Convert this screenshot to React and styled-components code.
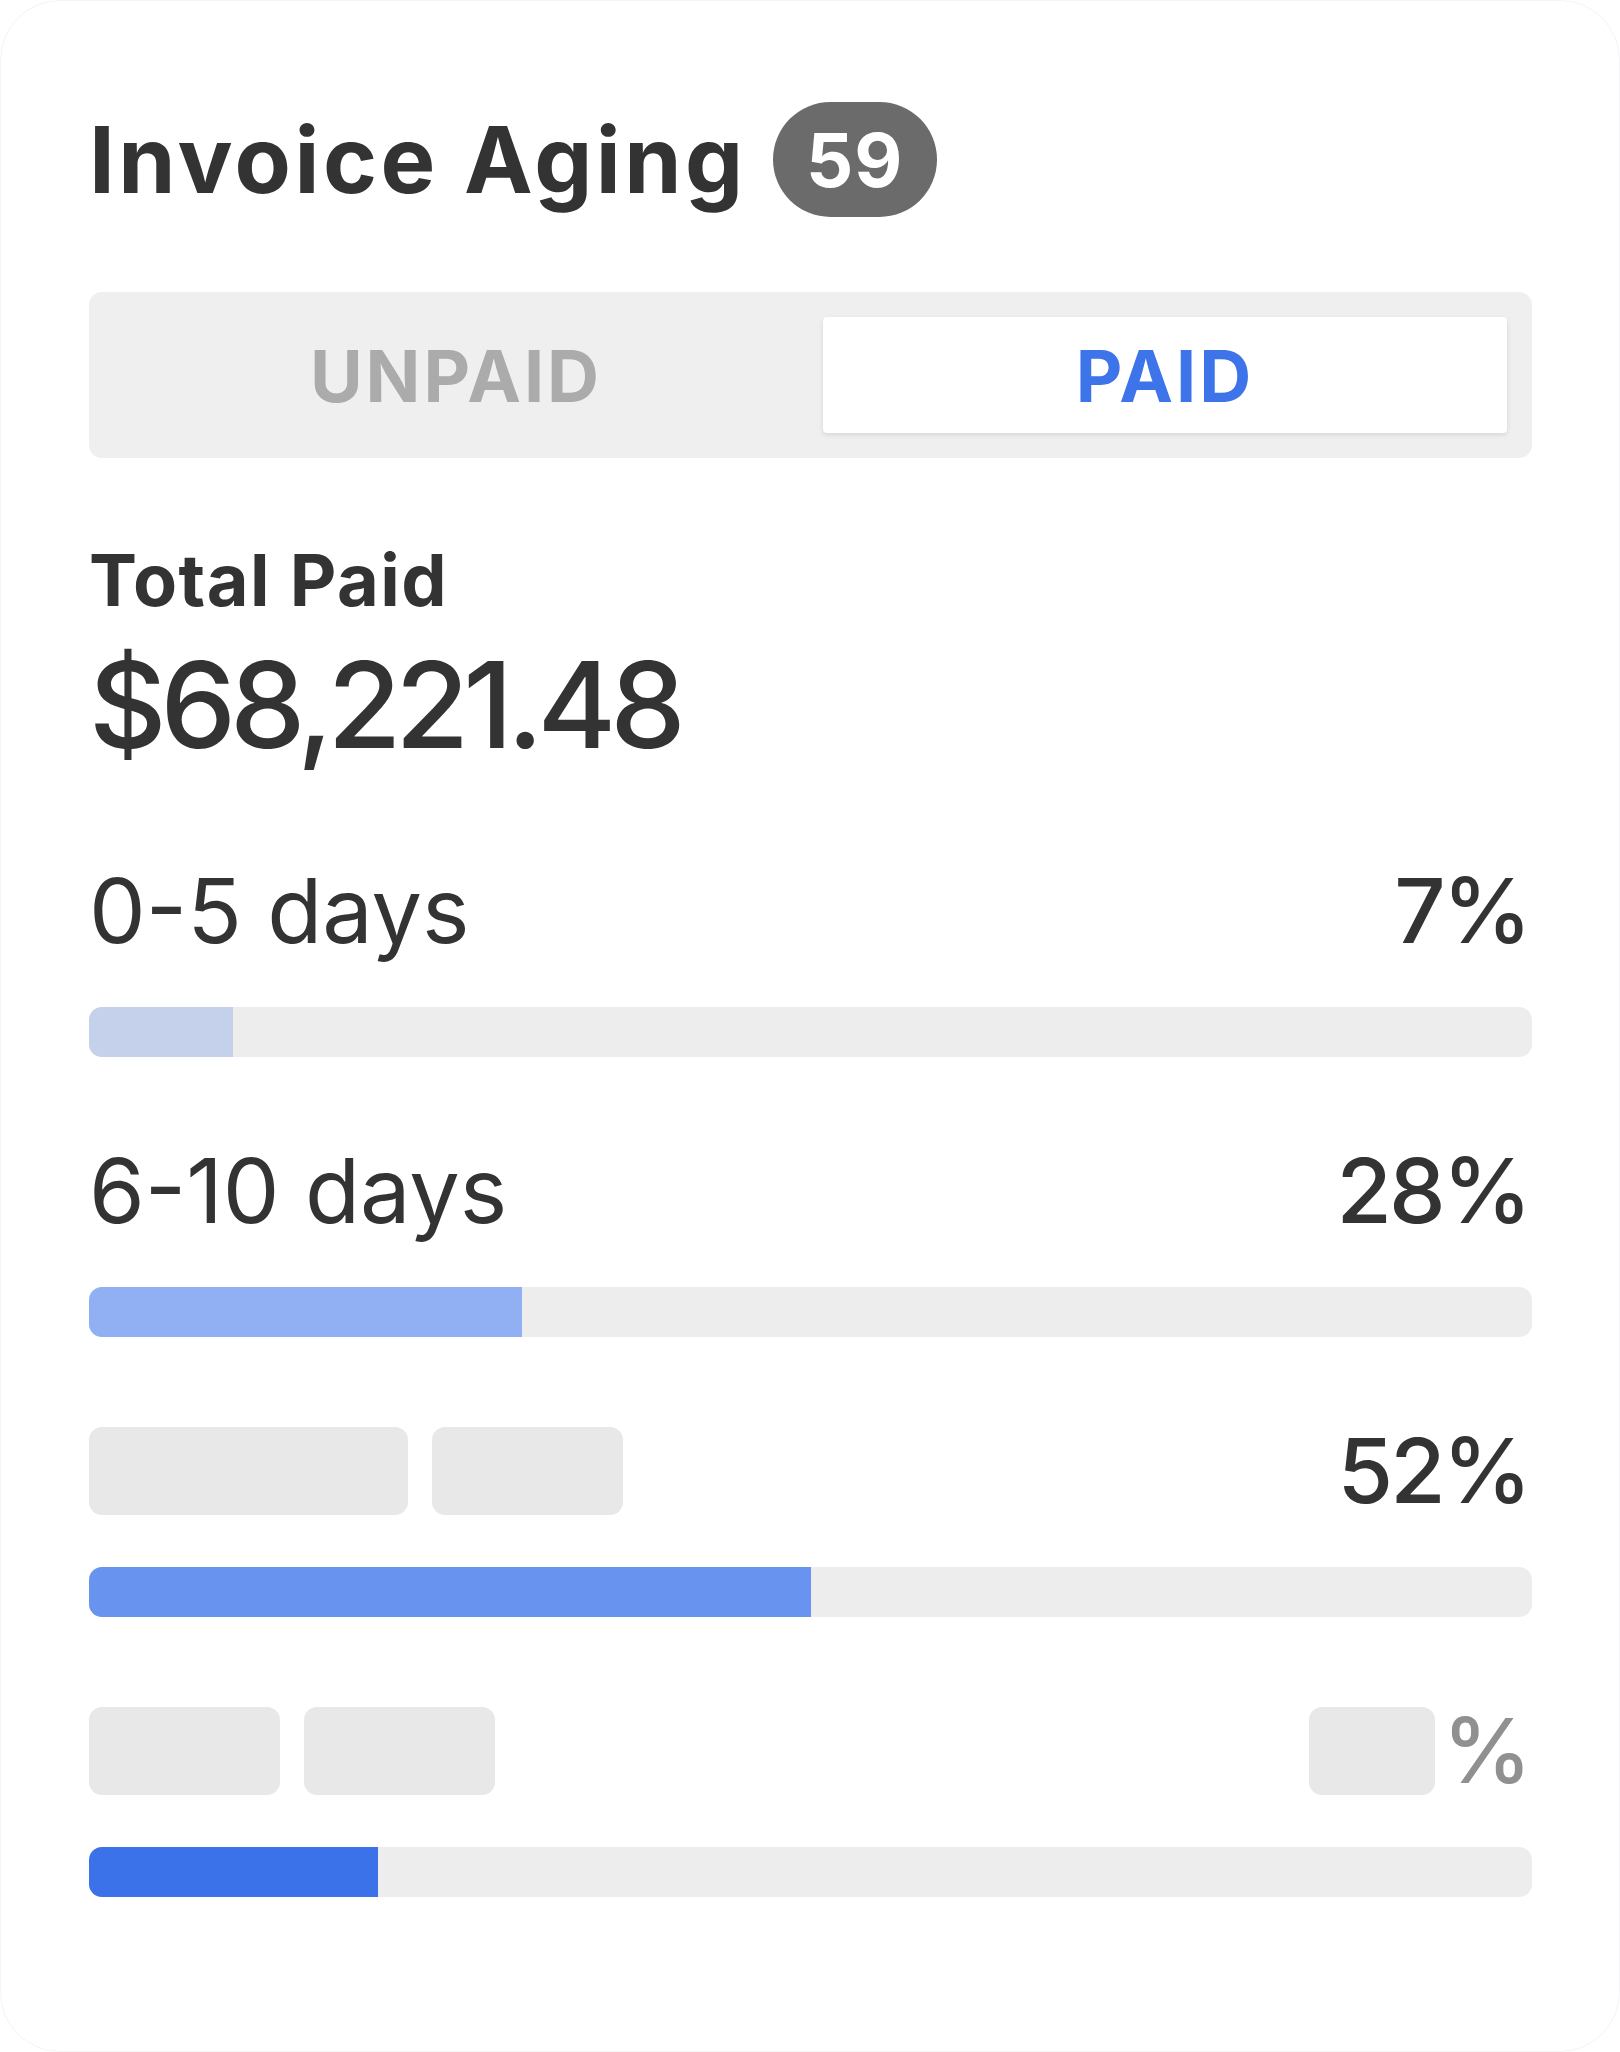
import styled, { createGlobalStyle } from "styled-components";

const GlobalStyle = createGlobalStyle`
  html, body {
    margin: 0;
    padding: 0;
    background: #ffffff;
  }
  * {
    box-sizing: border-box;
  }
`;

const rows = [
  { label: "0-5 days", value: "7%", fill: 10, color: "#c5d0ea" },
  { label: "6-10 days", value: "28%", fill: 30, color: "#91b0f3" },
  { skeleton: [319, 191], value: "52%", fill: 50, color: "#6893ee" },
  { skeleton: [191, 191], valueSkeleton: 126, value: "%", muted: true, fill: 20, color: "#3b72ea" },
];

function App() {
  return (
    <>
      <GlobalStyle />
      <Card>
        <Header>
          <Title>Invoice Aging</Title>
          <Badge>59</Badge>
        </Header>

        <Toggle>
          <ToggleOption>UNPAID</ToggleOption>
          <ToggleOption active>PAID</ToggleOption>
        </Toggle>

        <TotalLabel>Total Paid</TotalLabel>
        <TotalAmount>$68,221.48</TotalAmount>

        <RowList>
          {rows.map((row, i) => (
            <Row key={i}>
              <RowHead>
                {row.skeleton ? (
                  <SkeletonGroup>
                    {row.skeleton.map((w, j) => (
                      <Skeleton key={j} style={{ width: w }} />
                    ))}
                  </SkeletonGroup>
                ) : (
                  <RowLabel>{row.label}</RowLabel>
                )}
                <ValueGroup>
                  {row.valueSkeleton && <Skeleton style={{ width: row.valueSkeleton }} />}
                  <RowValue muted={row.muted}>{row.value}</RowValue>
                </ValueGroup>
              </RowHead>
              <Track>
                <Fill $color={row.color} style={{ width: `${row.fill}%` }} />
              </Track>
            </Row>
          ))}
        </RowList>
      </Card>
    </>
  );
}

const Card = styled.div`
  min-height: 100vh;
  width: 100%;
  background: #ffffff;
  border: 1px solid #f4f4f7;
  border-radius: 60px;
  padding: 101px 87px 120px 88px;
  font-family: Inter, "Liberation Sans", sans-serif;
  color: #333333;
`;

const Header = styled.div`
  display: flex;
  align-items: center;
  gap: 26px;
  height: 115px;
`;

const Title = styled.h1`
  margin: 0;
  font-size: 92px;
  line-height: 1;
  font-weight: 700;
  letter-spacing: 3.5px;
  color: #333333;
`;

const Badge = styled.span`
  display: inline-flex;
  align-items: center;
  justify-content: center;
  height: 115px;
  min-width: 164px;
  padding: 0 32px;
  border-radius: 58px;
  background: #6b6b6b;
  color: #ffffff;
  font-size: 74px;
  font-weight: 700;
  letter-spacing: 1px;
`;

const Toggle = styled.div`
  display: grid;
  grid-template-columns: 1fr 1fr;
  gap: 25px;
  margin-top: 75px;
  height: 166px;
  padding: 25px;
  border-radius: 13px;
  background: #efefef;
`;

const ToggleOption = styled.div`
  display: flex;
  align-items: center;
  justify-content: center;
  border-radius: 4px;
  font-size: 72px;
  font-weight: 700;
  letter-spacing: 3px;
  color: ${(p) => (p.active ? "#3d74e9" : "#ababab")};
  background: ${(p) => (p.active ? "#ffffff" : "transparent")};
  box-shadow: ${(p) => (p.active ? "0 2px 5px rgba(0, 0, 0, 0.1)" : "none")};
`;

const TotalLabel = styled.div`
  margin-top: 86px;
  font-size: 72px;
  line-height: 72px;
  font-weight: 700;
  letter-spacing: 1.5px;
`;

const TotalAmount = styled.div`
  margin-top: 29px;
  font-size: 120px;
  line-height: 120px;
  font-weight: 500;
  letter-spacing: -6px;
`;

const RowList = styled.div`
  display: flex;
  flex-direction: column;
  gap: 90px;
  margin-top: 102px;
`;

const Row = styled.div`
  display: flex;
  flex-direction: column;
  gap: 52px;
`;

const RowHead = styled.div`
  display: flex;
  align-items: center;
  justify-content: space-between;
  height: 88px;
`;

const RowLabel = styled.span`
  font-size: 90px;
  line-height: 88px;
  font-weight: 400;
`;

const ValueGroup = styled.div`
  display: flex;
  align-items: center;
  gap: 8px;
`;

const RowValue = styled.span`
  font-size: 90px;
  line-height: 88px;
  font-weight: 500;
  letter-spacing: -3px;
  margin-right: 3px;
  color: ${(p) => (p.muted ? "#909090" : "#333333")};
`;

const SkeletonGroup = styled.div`
  display: flex;
  gap: 24px;
`;

const Skeleton = styled.div`
  height: 88px;
  border-radius: 13px;
  background: #e8e8e8;
`;

const Track = styled.div`
  height: 50px;
  border-radius: 13px;
  background: #ededed;
  overflow: hidden;
`;

const Fill = styled.div`
  height: 100%;
  background: ${(p) => p.$color};
`;

export default App;
